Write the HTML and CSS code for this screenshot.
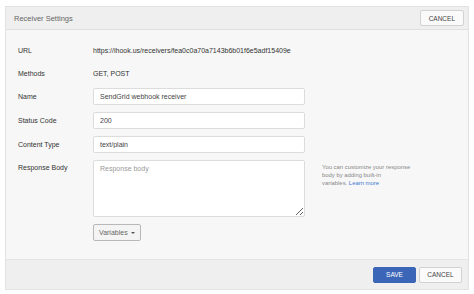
FILE: index.html
```html
<!DOCTYPE html>
<html lang="en">
<head>
    <meta charset="UTF-8">
    <meta name="viewport" content="width=device-width, initial-scale=1.0">
    <title>Receiver Settings</title>
    <link rel="stylesheet" href="styles.css">
</head>
<body>
    <div class="panel">
        <div class="panel-header">
            <span class="panel-title">Receiver Settings</span>
            <button class="btn">CANCEL</button>
        </div>

        <div class="panel-body">
            <div class="row">
                <div class="label">URL</div>
                <div class="value">https://ihook.us/receivers/fea0c0a70a7143b6b01f6e5adf15409e</div>
            </div>
            <div class="row">
                <div class="label">Methods</div>
                <div class="value">GET, POST</div>
            </div>
            <div class="row">
                <div class="label">Name</div>
                <input class="field" type="text" value="SendGrid webhook receiver">
            </div>
            <div class="row">
                <div class="label">Status Code</div>
                <input class="field" type="text" value="200">
            </div>
            <div class="row">
                <div class="label">Content Type</div>
                <input class="field" type="text" value="text/plain">
            </div>
            <div class="row row-top">
                <div class="label">Response Body</div>
                <div class="body-col">
                    <textarea class="field textarea" placeholder="Response body"></textarea>
                    <button class="btn btn-vars">Variables <span class="caret"></span></button>
                </div>
                <p class="help">You can customize your response<br>body by adding built-in<br>variables. <a href="#">Learn more</a></p>
            </div>
        </div>

        <div class="panel-footer">
            <button class="btn btn-primary">SAVE</button>
            <button class="btn">CANCEL</button>
        </div>
    </div>
</body>
</html>
```

FILE: styles.css
```css
body {
    margin: 0;
    padding: 6px 5px;
    background-color: #fff;
    font-family: 'Liberation Sans', Arial, sans-serif;
    font-size: 7px;
    color: #333;
}

.panel {
    width: 462px;
    border: 1px solid #e2e2e2;
    background-color: #f7f7f7;
}

.panel-header {
    display: flex;
    justify-content: space-between;
    align-items: center;
    height: 22px;
    padding: 0 4px 0 8px;
    background-color: #efefef;
    border-bottom: 1px solid #e0e0e0;
}

.panel-title {
    font-size: 7.5px;
    color: #666;
}

.btn {
    height: 16px;
    padding: 0 8px;
    font-family: inherit;
    font-size: 6.5px;
    color: #444;
    background-color: #fafafa;
    border: 1px solid #d2d2d2;
    border-radius: 2px;
}

.panel-body {
    display: flex;
    flex-direction: column;
    gap: 7px;
    padding: 12px 12px 18px;
}

.row {
    display: flex;
    align-items: center;
    min-height: 16px;
}

.row-top {
    align-items: flex-start;
}

.label {
    width: 75px;
    flex-shrink: 0;
}

.row-top .label {
    padding-top: 4px;
}

.value {
    color: #333;
}

.field {
    box-sizing: border-box;
    width: 212px;
    height: 17px;
    margin: 0;
    padding: 0 6px;
    font-family: inherit;
    font-size: 7px;
    color: #444;
    background-color: #fff;
    border: 1px solid #dcdcdc;
    border-radius: 2px;
    outline: none;
}

.body-col {
    display: flex;
    flex-direction: column;
    align-items: flex-start;
    gap: 7px;
}

.textarea {
    height: 57px;
    padding: 4px 6px;
    resize: vertical;
}

.textarea::placeholder {
    color: #999;
}

.btn-vars {
    height: 17px;
    padding: 0 5px;
    font-size: 7px;
    color: #666;
    background-color: #f4f4f4;
    border-color: #b8b8b8;
}

.caret {
    display: inline-block;
    width: 0;
    height: 0;
    margin-left: 1px;
    vertical-align: middle;
    border-left: 2px solid transparent;
    border-right: 2px solid transparent;
    border-top: 2px solid #555;
}

.help {
    margin: 3px 0 0 17px;
    font-size: 5.9px;
    line-height: 8px;
    color: #888;
}

.help a {
    color: #3b78d0;
    text-decoration: none;
}

.panel-footer {
    display: flex;
    justify-content: flex-end;
    align-items: center;
    gap: 3px;
    height: 29px;
    padding: 0 6px;
    background-color: #efefef;
    border-top: 1px solid #e4e4e4;
}

.panel-footer .btn {
    width: 43px;
    padding: 0;
}

.btn-primary {
    color: #fff;
    background-color: #3b66b8;
    border-color: #3b66b8;
}
```
